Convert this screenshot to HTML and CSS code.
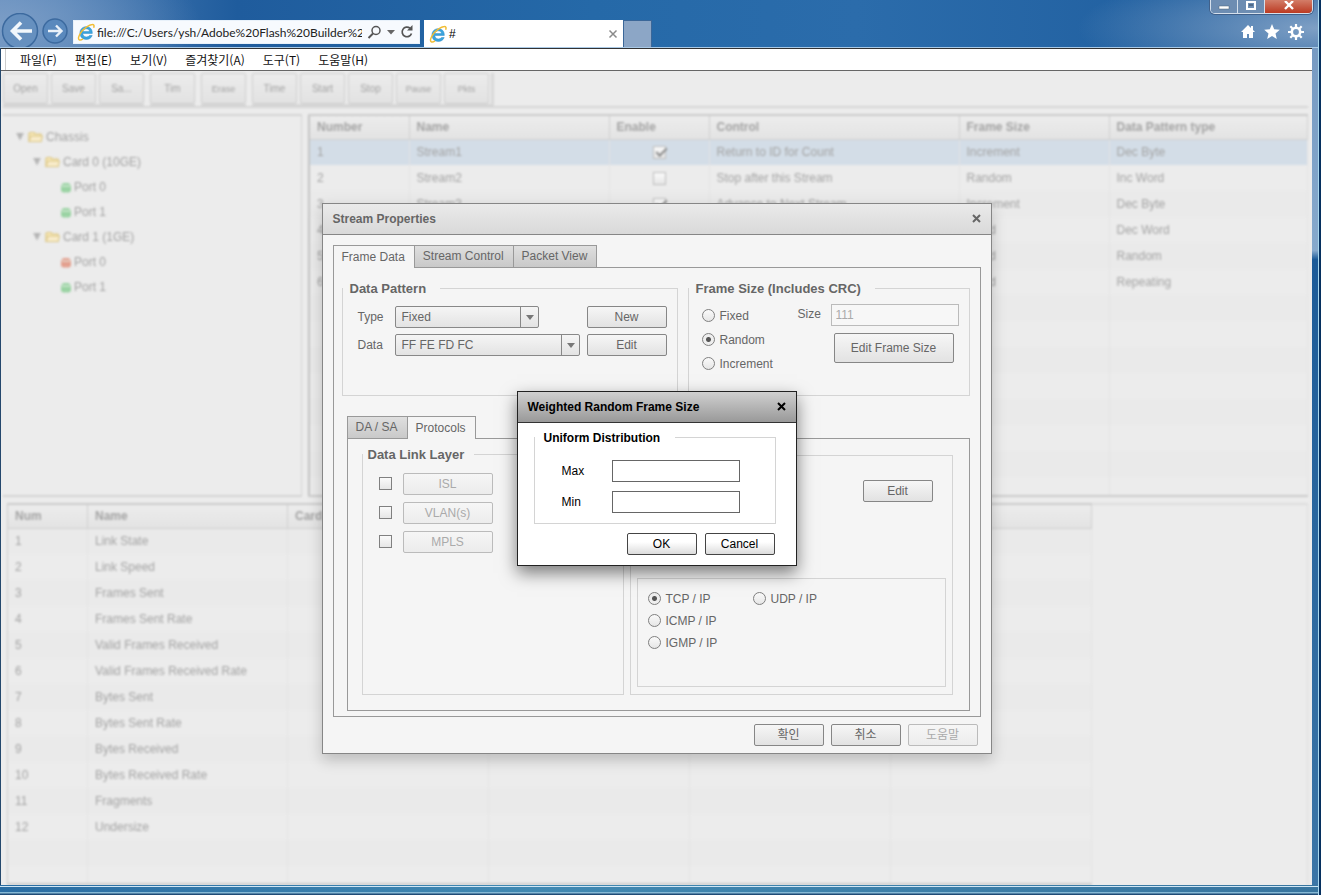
FILE: index.html
```html
<!DOCTYPE html>
<html lang="ko">
<head>
<meta charset="utf-8">
<title>Stream Properties</title>
<link rel="stylesheet" href="styles.css">
</head>
<body>
<svg class="defs" width="0" height="0" aria-hidden="true">
  <symbol id="ie" viewBox="0 0 16 16">
    <path d="M13.6 9.3H5.1c.2 2.1 1.6 3.1 3.3 3.1 1.3 0 2.2-.5 2.7-1.3h2.4c-.8 2.3-2.7 3.5-5.2 3.5-3.400 0-5.700-2.300-5.700-5.700S5 3.300 8.200 3.300c3.400 0 5.600 2.300 5.400 6zM5.200 7.600h5.900c-.2-1.500-1.300-2.400-2.900-2.400s-2.700.9-3 2.400z" fill="#3aa5de" stroke="#2585c3" stroke-width=".4"/>
    <path d="M14.800 4.200c.7-1.700.3-3-1.300-2.900C11 1.400 5.600 5 3 9.200c-1.700 2.800-2.200 5-1 5.700.9.500 2.200 0 3.300-.8" fill="none" stroke="#f0bd35" stroke-width="1.300"/>
  </symbol>
  <symbol id="folder" viewBox="0 0 15 12">
    <path d="M1 10.500V2.500l1-1h4l1.500 1.500H13v7.500z" fill="#f6e7b8" stroke="#dcc682" stroke-width="1.200"/>
    <path d="M1 10.500 3 5h11.500L13 10.500z" fill="#f8eccb" stroke="#dcc682"/>
  </symbol>
  <symbol id="port" viewBox="0 0 12 12">
    <path d="M1 5l2-3h6l2 3v5l-2 1.500H3L1 10z" fill="currentColor"/>
    <path d="M2 5h8" stroke="#e8f1e8" stroke-width="1"/>
  </symbol>
</svg>
<div class="window">
  <header class="chrome">
    <div class="nav">
      <button class="round" aria-label="Back"><svg width="38" height="34" viewBox="0 0 38 34"><circle cx="19" cy="18" r="17.500" fill="#6690bf" stroke="#3c6a9f" stroke-width="1.500"/><path d="M31 18H12M20 9.500 11.500 18l8.500 8.500" fill="none" stroke="#f2f7fc" stroke-width="3.600"/></svg></button>
      <button class="round" aria-label="Forward"><svg width="28" height="34" viewBox="0 0 28 34"><circle cx="14" cy="18" r="12" fill="#5a89bd" stroke="#3c6a9f" stroke-width="1.500"/><path d="M7 18h13M15 12.500l5.500 5.500-5.500 5.500" fill="none" stroke="#e9f1f9" stroke-width="2.400"/></svg></button>
    </div>
    <div class="address">
      <svg width="18" height="18"><use href="#ie"/></svg>
      <input class="url" aria-label="Address" value="file:///C:/Users/ysh/Adobe%20Flash%20Builder%204.6/">
      <button aria-label="Search"><svg width="15" height="15" viewBox="0 0 15 15"><circle cx="9" cy="5.500" r="4" fill="none" stroke="#555" stroke-width="1.500"/><path d="M6 8.500 1.500 13" stroke="#555" stroke-width="2"/></svg></button>
      <button aria-label="Address list"><svg width="8" height="5"><path d="M0 0h8L4 4.500z" fill="#666"/></svg></button>
      <button aria-label="Refresh"><svg width="14" height="14" viewBox="0 0 14 14"><path d="M11.500 8.500A4.800 4.800 0 1 1 10 3.200" fill="none" stroke="#555" stroke-width="1.700"/><path d="M12.500 0v5.500H7z" fill="#555"/></svg></button>
    </div>
    <div class="pagetab">
      <svg width="18" height="18"><use href="#ie"/></svg>
      <span class="pagename">#</span>
      <button aria-label="Close tab"><svg width="10" height="10"><path d="M1.500 1.500l7 7M8.500 1.500l-7 7" stroke="#8a8a8a" stroke-width="1.500"/></svg></button>
    </div>
    <button class="newtab" aria-label="New tab"></button>
    <div class="chromeend">
      <div class="caption">
        <button aria-label="Minimize"><svg width="12" height="12"><path d="M1 5h10v3H1z" fill="#fff" stroke="#4b6077" stroke-width=".5"/></svg></button>
        <button aria-label="Maximize"><svg width="12" height="12"><path d="M2 1h8v7H2z" fill="none" stroke="#fff" stroke-width="2"/><path d="M4 4h4" stroke="#34495e"/></svg></button>
        <button class="exit" aria-label="Close"><svg width="12" height="12"><path d="M2 0l8 8M10 0L2 8" stroke="#fff" stroke-width="2.400"/></svg></button>
      </div>
      <div class="tools">
        <button aria-label="Home"><svg width="16" height="16" viewBox="0 0 16 16"><path d="M8 1 1 8h2v6h4v-4h2v4h4V8h2l-2-2V2h-2v2z" fill="#fff"/></svg></button>
        <button aria-label="Favorites"><svg width="16" height="16" viewBox="0 0 16 16"><path d="M8 0l2.200 5.300 5.600.4-4.300 3.700 1.300 5.600L8 12l-4.800 3 1.300-5.600L.2 5.700l5.600-.4z" fill="#fff"/></svg></button>
        <button aria-label="Settings"><svg width="16" height="16" viewBox="0 0 16 16"><circle cx="8" cy="8" r="4.200" fill="none" stroke="#fff" stroke-width="2.600"/><path d="M8 0v3M8 13v3M0 8h3M13 8h3M2.300 2.300l2 2M11.700 11.700l2 2M2.300 13.700l2-2M11.700 4.300l2-2" stroke="#fff" stroke-width="2.200"/></svg></button>
      </div>
    </div>
  </header>
  <nav class="menubar">
    <button>파일(F)</button><button>편집(E)</button><button>보기(V)</button><button>즐겨찾기(A)</button><button>도구(T)</button><button>도움말(H)</button>
  </nav>
  <main class="app">
    <div class="workspace">
      <div class="toolbar">
        <div class="group"><button>Open</button><button>Save</button><button>Sa...</button></div>
        <div class="group"><button>Tim</button></div>
        <div class="group"><button class="small">Erase</button></div>
        <div class="group"><button>Time</button><button>Start</button><button>Stop</button><button class="small">Pause</button><button class="small">Pkts</button></div>
      </div>
      <div class="upper">
        <ul class="tree">
          <li><div class="node"><button class="twist" aria-label="Collapse"></button><svg width="15" height="12"><use href="#folder"/></svg><span>Chassis</span></div>
            <ul>
              <li><div class="node"><button class="twist" aria-label="Collapse"></button><svg width="15" height="12"><use href="#folder"/></svg><span>Card 0 (10GE)</span></div>
                <ul>
                  <li class="leaf"><div class="node"><svg class="up" width="12" height="12"><use href="#port"/></svg><span>Port 0</span></div></li>
                  <li class="leaf"><div class="node"><svg class="up" width="12" height="12"><use href="#port"/></svg><span>Port 1</span></div></li>
                </ul>
              </li>
              <li><div class="node"><button class="twist" aria-label="Collapse"></button><svg width="15" height="12"><use href="#folder"/></svg><span>Card 1 (1GE)</span></div>
                <ul>
                  <li class="leaf"><div class="node"><svg class="down" width="12" height="12"><use href="#port"/></svg><span>Port 0</span></div></li>
                  <li class="leaf"><div class="node"><svg class="up" width="12" height="12"><use href="#port"/></svg><span>Port 1</span></div></li>
                </ul>
              </li>
            </ul>
          </li>
        </ul>
        <table class="grid streams">
          <colgroup><col class="w100"><col class="w200"><col class="w100"><col class="w250"><col class="w150"><col></colgroup>
          <thead><tr><th>Number</th><th>Name</th><th>Enable</th><th>Control</th><th>Frame Size</th><th>Data Pattern type</th></tr></thead>
          <tbody>
            <tr class="selected"><td>1</td><td>Stream1</td><td class="mid"><input type="checkbox" checked aria-label="Enable Stream1"></td><td>Return to ID for Count</td><td>Increment</td><td>Dec Byte</td></tr>
            <tr><td>2</td><td>Stream2</td><td class="mid"><input type="checkbox" aria-label="Enable Stream2"></td><td>Stop after this Stream</td><td>Random</td><td>Inc Word</td></tr>
            <tr><td>3</td><td>Stream3</td><td class="mid"><input type="checkbox" checked aria-label="Enable Stream3"></td><td>Advance to Next Stream</td><td>Increment</td><td>Dec Byte</td></tr>
            <tr><td>4</td><td></td><td></td><td></td><td>Fixed</td><td>Dec Word</td></tr>
            <tr><td>5</td><td></td><td></td><td></td><td>Fixed</td><td>Random</td></tr>
            <tr><td>6</td><td></td><td></td><td></td><td>Fixed</td><td>Repeating</td></tr>
            <tr class="rest"><td></td><td></td><td></td><td></td><td></td><td></td></tr>
          </tbody>
        </table>
      </div>
      <div class="lower">
        <table class="grid stats">
          <colgroup><col class="w80"><col class="w200"><col><col><col><col></colgroup>
          <thead><tr><th>Num</th><th>Name</th><th>Card</th><th></th><th></th><th></th></tr></thead>
          <tbody>
            <tr><td>1</td><td>Link State</td><td></td><td></td><td></td><td></td></tr>
            <tr><td>2</td><td>Link Speed</td><td></td><td></td><td></td><td></td></tr>
            <tr><td>3</td><td>Frames Sent</td><td></td><td></td><td></td><td></td></tr>
            <tr><td>4</td><td>Frames Sent Rate</td><td></td><td></td><td></td><td></td></tr>
            <tr><td>5</td><td>Valid Frames Received</td><td></td><td></td><td></td><td></td></tr>
            <tr><td>6</td><td>Valid Frames Received Rate</td><td></td><td></td><td></td><td></td></tr>
            <tr><td>7</td><td>Bytes Sent</td><td></td><td></td><td></td><td></td></tr>
            <tr><td>8</td><td>Bytes Sent Rate</td><td></td><td></td><td></td><td></td></tr>
            <tr><td>9</td><td>Bytes Received</td><td></td><td></td><td></td><td></td></tr>
            <tr><td>10</td><td>Bytes Received Rate</td><td></td><td></td><td></td><td></td></tr>
            <tr><td>11</td><td>Fragments</td><td></td><td></td><td></td><td></td></tr>
            <tr><td>12</td><td>Undersize</td><td></td><td></td><td></td><td></td></tr>
            <tr class="rest"><td></td><td></td><td></td><td></td><td></td><td></td></tr>
          </tbody>
        </table>
        <div class="blank"></div>
      </div>
    </div>

    <div class="overlay">
      <section class="dialog properties" role="dialog" aria-label="Stream Properties">
        <div class="title"><h1>Stream Properties</h1><button class="close" aria-label="Close"><svg width="9" height="9"><path d="M1 1l7 7M8 1L1 8" stroke="currentColor" stroke-width="2"/></svg></button></div>
        <div class="tabs"><button class="tab active">Frame Data</button><button class="tab">Stream Control</button><button class="tab">Packet View</button></div>
        <div class="panel">
          <div class="cols">
            <fieldset class="pattern">
              <legend>Data Pattern</legend>
              <div class="patterngrid">
                <label for="type">Type</label>
                <span class="select typesel"><select id="type"><option>Fixed</option></select></span>
                <button class="btn">New</button>
                <label for="data">Data</label>
                <span class="select"><select id="data"><option>FF FE FD FC</option></select></span>
                <button class="btn">Edit</button>
              </div>
            </fieldset>
            <fieldset class="framesize">
              <legend>Frame Size (Includes CRC)</legend>
              <div class="sizegrid">
                <div class="radios">
                  <label><input type="radio" name="fs">Fixed</label>
                  <label><input type="radio" name="fs" checked>Random</label>
                  <label><input type="radio" name="fs">Increment</label>
                </div>
                <div class="sizecol">
                  <div class="sizerow"><label for="size">Size</label><input class="text" id="size" value="111" disabled></div>
                  <button class="btn big">Edit Frame Size</button>
                </div>
              </div>
            </fieldset>
          </div>
          <div class="sub">
            <div class="tabs"><button class="tab">DA / SA</button><button class="tab active">Protocols</button></div>
            <div class="subpanel">
              <fieldset class="link">
                <legend>Data Link Layer</legend>
                <div class="checks">
                  <div><input type="checkbox" aria-label="ISL"><button class="btn" disabled>ISL</button></div>
                  <div><input type="checkbox" aria-label="VLAN(s)"><button class="btn" disabled>VLAN(s)</button></div>
                  <div><input type="checkbox" aria-label="MPLS"><button class="btn" disabled>MPLS</button></div>
                </div>
              </fieldset>
              <div class="network">
                <button class="btn">Edit</button>
                <div class="ip">
                  <label><input type="radio" name="ip" checked>TCP / IP</label>
                  <label><input type="radio" name="ip">UDP / IP</label>
                  <label><input type="radio" name="ip">ICMP / IP</label>
                  <label class="newline"><input type="radio" name="ip">IGMP / IP</label>
                </div>
              </div>
            </div>
          </div>
        </div>
        <div class="actions"><button class="btn">확인</button><button class="btn">취소</button><button class="btn" disabled>도움말</button></div>
      </section>
    </div>

    <div class="overlay">
      <section class="dialog weighted" role="dialog" aria-label="Weighted Random Frame Size">
        <div class="title"><h2>Weighted Random Frame Size</h2><button class="close" aria-label="Close"><svg width="9" height="9"><path d="M1 1l7 7M8 1L1 8" stroke="currentColor" stroke-width="2"/></svg></button></div>
        <div class="weightedbody">
          <fieldset>
            <legend>Uniform Distribution</legend>
            <div class="minmax">
              <label for="max">Max</label><input class="text" id="max">
              <label for="min">Min</label><input class="text" id="min">
            </div>
          </fieldset>
          <div class="confirm"><button class="btn">OK</button><button class="btn">Cancel</button></div>
        </div>
      </section>
    </div>
  </main>
</div>
</body>
</html>
```
FILE: styles.css
```css
* { box-sizing: border-box; }

body {
  margin: 0;
  font: 12px/16px "Liberation Sans", "Noto Sans CJK KR", sans-serif;
  color: #666;
  background: #06305f;
}

button {
  font: inherit;
  color: inherit;
  margin: 0;
  padding: 0;
  border: 0;
  background: none;
}

input, select { font: inherit; color: inherit; margin: 0; }
svg { display: block; flex: none; }
.defs { position: absolute; }
h1, h2 { margin: 0; font-size: 12px; line-height: 16px; }

/* Browser window */
.window {
  display: flex;
  flex-direction: column;
  min-height: 100vh;
  padding: 0 9px 10px 1px;
  background:
    linear-gradient(#06305f, #06305f) right / 2px 100% no-repeat,
    linear-gradient(#a9d8ee, #a9d8ee) right 2px top 0 / 1px 100% no-repeat,
    linear-gradient(#9fd4ec, #06305f) left bottom / 100% 3px no-repeat,
    linear-gradient(#cfe6f5, #cfe6f5) left 0 bottom 8px / 100% 1px no-repeat,
    linear-gradient(90deg, #2a6da3, #4189b2 40%, #38759f) left bottom / 100% 10px no-repeat,
    linear-gradient(#7397c0, #86a9cc 28%, #1c5b98 29%, #3c76a7) right / 9px 100% no-repeat,
    linear-gradient(#24486d, #24486d);
}

.chrome {
  display: flex;
  align-items: flex-end;
  height: 48px;
  margin-left: -1px;
  margin-right: -6px;
  background:
    radial-gradient(ellipse 240px 60px at 100% 60%, #7fa0c5, transparent),
    radial-gradient(ellipse 200px 80px at 0 50%, #7b9dc6, transparent),
    linear-gradient(90deg, #5b88bc, #1f5c9d 18%, #2569a8 45%, #2b6cab 65%, #1d5b9c);
  border-bottom: 1px solid #a9c9e6;
}

.nav { display: flex; align-items: flex-end; width: 73px; padding-left: 1px; gap: 2px; overflow: hidden; }

.address {
  display: flex;
  align-items: center;
  gap: 5px;
  width: 347px;
  height: 24px;
  margin: 0 4px 3px 0;
  padding: 0 5px 0 3px;
  background: #f7fafe;
  border: 1px solid #e8f1fa;
  color: #222;
}

.url {
  flex: 1;
  min-width: 0;
  height: 22px;
  padding: 0;
  margin-left: -3px;
  border: 0;
  background: none;
  font: 12px Lato, sans-serif;
}

.pagetab {
  display: flex;
  align-items: center;
  gap: 2px;
  width: 199px;
  height: 27px;
  padding: 0 5px;
  background: #fff;
  color: #000;
}

.pagename { flex: 1; }
.newtab { width: 29px; height: 27px; background: #8ca6c6; border: 1px solid #3b6799; border-bottom: 0; }

.chromeend {
  display: flex;
  flex-direction: column;
  justify-content: space-between;
  align-items: flex-end;
  margin-left: auto;
  align-self: stretch;
  padding: 0 5px 7px 0;
}

.caption {
  display: flex;
  height: 14px;
  border: 1px solid #d5e0ec;
  border-top: 0;
  border-radius: 0 0 5px 5px;
  overflow: hidden;
  box-shadow: 0 0 0 1px #40608a;
}

.caption button { width: 27px; padding-left: 7px; background: #6d8db2; border-right: 1px solid #d5e0ec; }
.caption .exit { width: 47px; padding-left: 18px; background: linear-gradient(#d37d68, #bb3a22); border: 0; }
.tools { display: flex; gap: 8px; padding-right: 9px; }

.menubar {
  display: flex;
  align-items: center;
  gap: 18px;
  height: 23px;
  padding-left: 19px;
  background: linear-gradient(90deg, transparent 4px, #ccc 4px, #ccc 5px, transparent 5px), #fff;
  border-top: 1px solid #333;
  border-bottom: 1px solid #666;
  color: #111;
  font-family: "Noto Sans CJK KR", sans-serif;
}

/* Application page */
.app { position: relative; display: flex; flex: 1; background: #ececec; overflow: hidden; }

.workspace {
  flex: 1;
  display: flex;
  flex-direction: column;
  min-width: 0;
  padding: 0 4px 0 2px;
  color: #a3a3a3;
  filter: blur(1px);
}

.toolbar { display: flex; gap: 6px; height: 37px; padding-top: 2px; border-bottom: 2px solid #d6d6d6; }
.toolbar .group { display: flex; gap: 3px; border-bottom: 2px solid #d6d6d6; }
.toolbar .group:last-child { border-right: 3px solid #d8d8d8; padding-right: 2px; }

.toolbar button {
  width: 45px;
  height: 31px;
  font-size: 10px;
  border: 1px solid #cecece;
  border-radius: 2px;
  background: linear-gradient(#ececec, #e2e2e2);
}

.toolbar .small { font-size: 9px; }

.upper { display: flex; gap: 6px; height: 383px; margin-top: 6px; }
.lower { display: flex; flex: 1; margin: 6px 0 0 4px; }

.tree, .tree ul { margin: 0; padding: 0; list-style: none; }
.tree { width: 299px; padding: 8px 0 0 12px; border: 1px solid #d4d4d4; border-width: 2px 1px 2px 0; }
.tree ul { padding-left: 17px; }
.tree .leaf { padding-left: 11px; }
.node { display: flex; align-items: center; gap: 3px; height: 25px; }
.leaf .node { gap: 2px; }
.twist { width: 10px; height: 8px; background: #b4b4b4; clip-path: polygon(10% 0, 90% 0, 50% 100%); }
.up { color: #9ad3a3; }
.down { color: #e3a08f; }

.grid { border-collapse: collapse; table-layout: fixed; border: 1px solid #cbcbcb; border-width: 2px 1px; }
.streams { flex: 1; border-left: 2px solid #c4c4c4; }
.stats { width: 1085px; }
.w80 { width: 80px; }
.w100 { width: 100px; }
.w150 { width: 150px; }
.w200 { width: 200px; }
.w250 { width: 250px; }
.grid th { height: 24px; padding: 0 7px; text-align: left; border-right: 1px solid #d0d0d0; border-bottom: 1px solid #d0d0d0; background: linear-gradient(#ececec, #e3e3e3); }
.grid td { height: 26px; padding: 0 7px; border-right: 1px solid #e3e3e3; }
.grid tbody tr:nth-child(odd) { background: #eaeaea; }
.grid tbody tr.selected { background: #d3dde7; }
.grid .rest td { height: auto; background: repeating-linear-gradient(#eaeaea 0 26px, #ececec 26px 52px); }
.grid .mid { text-align: center; line-height: 0; }
.blank { flex: 1; border: 1px solid #dedede; border-width: 2px 1px 0 0; }

/* Dialogs */
.overlay { position: absolute; inset: 0; display: grid; place-items: center; }
.dialog { display: flex; flex-direction: column; border: 1px solid #868686; }

.title {
  display: flex;
  align-items: center;
  justify-content: space-between;
  height: 31px;
  padding: 0 10px;
  border-bottom: 1px solid #868686;
  background: linear-gradient(#eaeaea, #d9d9d9);
}

.properties { width: 670px; background: #f5f5f5; box-shadow: 0 6px 14px rgba(0, 0, 0, .2); }
.tabs { display: flex; height: 22px; }
.properties > .tabs { margin: 10px 10px 0; }

.tab {
  padding: 0 9px 0 8px;
  border: 1px solid #999;
  border-bottom: 0;
  margin-right: -1px;
  background: linear-gradient(#dfdfdf, #c9c9c9);
}

.tab.active { height: 23px; background: #f5f5f5; z-index: 1; }

.panel { margin: 0 10px; padding: 13px 10px 5px 8px; border: 1px solid #999; }
.cols { display: flex; gap: 10px; align-items: stretch; }

fieldset { min-width: 0; margin: 0; padding: 0; border: 1px solid #d4d4d4; }
legend { padding: 0 14px 0 7px; font-size: 13px; line-height: 16px; font-weight: bold; }
.pattern { width: 336px; height: 115px; }
.framesize { flex: 1; }

.patterngrid {
  display: grid;
  grid-template-columns: 37px 1fr 80px;
  gap: 6px 0;
  align-items: center;
  padding: 9px 10px 0 15px;
}

.select { position: relative; display: flex; width: 185px; }
.typesel { width: 144px; }

.select::after {
  content: "";
  position: absolute;
  right: 5px;
  top: 9px;
  border: 4px solid transparent;
  border-top: 5px solid #777;
  border-bottom: 0;
}

.select select {
  width: 100%;
  height: 22px;
  padding: 0 6px;
  appearance: none;
  border: 1px solid #888;
  border-radius: 2px;
  background: linear-gradient(#888, #888) right 17px top 0 / 1px 100% no-repeat, linear-gradient(#f5f5f5, #e3e3e3);
}

.btn {
  width: 70px;
  height: 22px;
  border: 1px solid #868686;
  border-radius: 2px;
  background: linear-gradient(#f6f6f6, #e2e2e2);
}

.btn:disabled { color: #aaa; border-color: #bbb; background: linear-gradient(#f6f6f6, #ececec); }
.patterngrid .btn { width: 80px; }

.sizegrid { display: flex; justify-content: space-between; padding: 7px 10px 0 13px; }
.radios label { display: flex; align-items: center; gap: 5px; height: 24px; }
.sizecol { display: flex; flex-direction: column; gap: 7px; }
.sizerow { display: flex; }
.sizerow label { width: 33px; line-height: 20px; }
.text { width: 128px; height: 22px; padding: 0 4px; border: 1px solid #666; background: #fff; }
.text:disabled { color: #aaa; border-color: #bbb; background: #f7f7f7; }
.btn.big { align-self: flex-end; width: 120px; height: 30px; margin-right: 5px; }

input[type="radio"], input[type="checkbox"] {
  appearance: none;
  flex: none;
  width: 13px;
  height: 13px;
  border: 1px solid #808080;
  background: linear-gradient(#fafafa, #e6e6e6);
}

input[type="radio"] { border-radius: 50%; }
input[type="radio"]:checked { background: radial-gradient(circle, #555 2px, #eee 3px); }
.grid input[type="checkbox"] { border-color: #bdbdbd; }

.grid input[type="checkbox"]:checked::before {
  content: "";
  display: block;
  width: 9px;
  height: 4px;
  margin: 1px 0 0 2px;
  border: solid #8c8c8c;
  border-width: 0 0 2px 2px;
  rotate: -45deg;
}

.sub { margin: 20px 0 0 5px; }
.subpanel { display: flex; gap: 6px; height: 273px; padding: 8px 16px 15px 14px; border: 1px solid #999; }
.link { width: 262px; }
.link legend { padding: 0 10px 0 5px; }
.checks { display: grid; gap: 7px; padding: 10px 16px; }
.checks div { display: flex; align-items: center; gap: 11px; }
.checks .btn { width: 90px; }

.network {
  display: flex;
  flex-direction: column;
  justify-content: space-between;
  flex: 1;
  margin-top: 8px;
  padding: 24px 6px 7px;
  border: 1px solid #d4d4d4;
}

.network .btn { align-self: flex-end; margin-right: 13px; }

.ip {
  display: grid;
  grid-template-columns: 105px 1fr;
  grid-auto-rows: 22px;
  height: 109px;
  padding: 9px 10px;
  border: 1px solid #d4d4d4;
}

.ip label { display: flex; align-items: center; gap: 5px; }
.ip .newline { grid-column: 1; }
.actions { display: flex; justify-content: flex-end; gap: 7px; padding: 7px 13px; }

.weighted {
  width: 280px;
  color: #000;
  background: #fff;
  border-color: #222;
  box-shadow: 0 7px 16px rgba(0, 0, 0, .5);
}

.weighted .title { border-color: #333; background: linear-gradient(#d0d0d0, #999); }
.weightedbody { padding: 7px 20px 10px 16px; }
.weighted legend { padding: 0 15px 0 9px; font-size: 12px; }

.minmax {
  display: grid;
  grid-template-columns: 50px 128px;
  gap: 9px 0;
  align-items: center;
  padding: 14px 0 10px 27px;
}

.confirm { display: flex; justify-content: flex-end; gap: 8px; padding: 9px 1px 0 0; }
.weighted .btn { border-color: #444; background: linear-gradient(#fff 40%, #dcdcdc); }
```
